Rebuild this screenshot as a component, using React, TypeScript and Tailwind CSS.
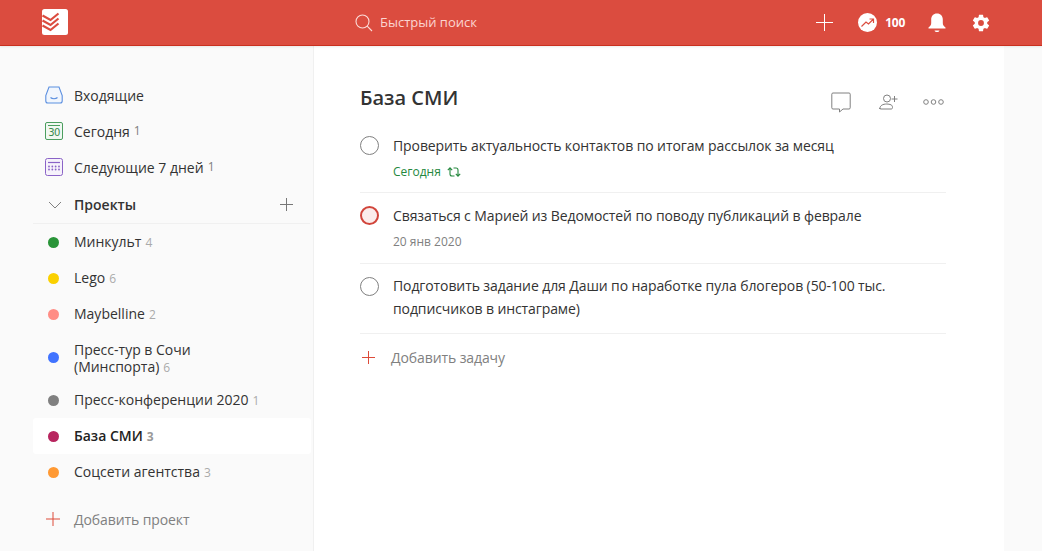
const font = { fontFamily: '"Open Sans", "Noto Sans", sans-serif' };

function Logo() {
  return (
    <svg width="26" height="26" viewBox="0 0 26 26">
      <rect width="26" height="26" rx="2.5" fill="#fff" />
      <path d="M0.500 6.500 L8.500 11 L16.500 4.500 M0.500 11.500 L8.500 16 L16.500 9.500 M0.500 16.500 L8.500 21 L16.500 14.500" fill="none" stroke="#db4c3f" strokeWidth="2.2" />
    </svg>
  );
}

function Plus({ size = 15, color = "#777", sw = 1 }: { size?: number; color?: string; sw?: number }) {
  return (
    <svg width={size} height={size} viewBox={`0 0 ${size} ${size}`} className="shrink-0">
      <path d={`M${size / 2} 0V${size}M0 ${size / 2}H${size}`} stroke={color} strokeWidth={sw} fill="none" />
    </svg>
  );
}

function Inbox() {
  return (
    <svg width="18" height="18" viewBox="0 0 18 18" fill="none" className="shrink-0">
      <path d="M4 1h10l3.200 8.500V15a2 2 0 0 1-2 2H2.800a2 2 0 0 1-2-2V9.500z" stroke="#5b8fe0" strokeWidth="1.100" fill="#f1f6fd" />
      <path d="M5.500 11.500c1 1 2 1.200 3.500 1.200s2.500-.2 3.500-1.200" stroke="#5b8fe0" strokeWidth="1.100" />
    </svg>
  );
}

function Today() {
  return (
    <div className="w-[18px] h-[18px] shrink-0 rounded-[2px] border border-[#4b9e5f] bg-[#f1f8f2] flex flex-col items-center pt-[2px]">
      <div className="w-[12px] h-px bg-[#4b9e5f]" />
      <span className="text-[10px] leading-[11px] text-[#3a8a4d] mt-px" style={{ fontFamily: '"DejaVu Sans", sans-serif', letterSpacing: "-0.5px" }}>30</span>
    </div>
  );
}

function Upcoming() {
  const dots = [];
  for (let y = 8.5; y <= 13; y += 3) for (let x = 4; x <= 14; x += 3.33) dots.push(<circle key={`${x}-${y}`} cx={x} cy={y} r="0.9" fill="#8a63c7" />);
  return (
    <svg width="18" height="18" viewBox="0 0 18 18" fill="none" className="shrink-0">
      <rect x="0.500" y="0.500" width="17" height="17" rx="2" stroke="#8a63c7" fill="#f6f2fb" />
      <path d="M3 4.500H15" stroke="#8a63c7" strokeWidth="1.200" />
      {dots}
    </svg>
  );
}

function Chevron() {
  return (
    <svg width="14" height="8" viewBox="0 0 14 8" fill="none" className="shrink-0">
      <path d="M1 1l6 6 6-6" stroke="#808080" strokeWidth="1" />
    </svg>
  );
}

function NavRow({ icon, label, count }: { icon: React.ReactNode; label: string; count?: string }) {
  return (
    <div className="h-9 flex items-center pl-3">
      <div className="w-[29px] flex">{icon}</div>
      <span className="text-[14px] text-[#333]">{label}</span>
      {count && <span className="text-[12px] text-[#808080] ml-[4px]">{count}</span>}
    </div>
  );
}

function Project({ color, label, count, active, two }: { color: string; label: React.ReactNode; count?: string; active?: boolean; two?: boolean }) {
  return (
    <div className={`flex items-center pl-[15px] pr-2 rounded-[3px] ${two ? "h-[50px]" : "h-9"} ${active ? "bg-white" : ""}`}>
      <div className="w-[11px] h-[11px] rounded-full shrink-0" style={{ backgroundColor: color }} />
      <div className={`ml-[15px] text-[14px] leading-[17px] ${two ? "pt-[2px]" : ""} ${active ? "font-semibold text-[#222]" : "text-[#333]"}`}>
        {label}
        {count && <span className={`text-[12px] ml-[4px] ${active ? "font-bold text-[#999]" : "text-[#aaa]"}`}>{count}</span>}
      </div>
    </div>
  );
}

function Circle({ red }: { red?: boolean }) {
  return (
    <div className={`w-[19px] h-[19px] rounded-full shrink-0 ${red ? "border-2 border-[#d1453b] bg-[#fbeceb]" : "border border-[#808080]"}`} />
  );
}

function Repeat() {
  return (
    <svg width="14" height="12" viewBox="0 0 14 12" fill="none" className="ml-[6px]">
      <path d="M3 2v6a2 2 0 0 0 2 2h2.500M.800 4.200 3 1.800l2.200 2.400M11 10V4a2 2 0 0 0-2-2H6.500M8.800 7.800 11 10.200l2.200-2.400" stroke="#25883e" strokeWidth="1.100" />
    </svg>
  );
}

export default function App() {
  return (
    <div className="w-[1042px] h-[551px] overflow-hidden bg-[#fafafa] flex flex-col" style={font}>
      <header className="h-[46px] shrink-0 bg-[#db4c3f] border-b border-[#c9301f] flex items-center relative shadow-[0_1px_2px_rgba(0,0,0,0.08)]">
        <div className="ml-[42px] -mt-[2px]"><Logo /></div>
        <div className="ml-[287px] flex items-center">
          <svg width="18" height="18" viewBox="0 0 18 18" fill="none">
            <circle cx="7.500" cy="7.500" r="6.500" stroke="#fbdcd9" strokeWidth="1.100" />
            <path d="M12.200 12.200L17 17" stroke="#fbdcd9" strokeWidth="1.100" />
          </svg>
          <span className="ml-[7px] text-[13px] text-[#fbd5d1]">Быстрый поиск</span>
        </div>
        <div className="ml-auto flex items-center mr-[51px]">
          <Plus size={17} color="#fff" sw={1} />
          <svg width="19" height="19" viewBox="0 0 19 19" className="ml-[25px]">
            <circle cx="9.500" cy="9.500" r="9.500" fill="#fff" />
            <path d="M3.500 13.500L8 9l2.500 2L15 6.500M11.500 6h4v4" fill="none" stroke="#db4c3f" strokeWidth="1.200" />
          </svg>
          <span className="ml-[8px] text-[12px] font-bold text-white tracking-[-0.3px]">100</span>
          <svg width="18" height="20" viewBox="0 0 18 20" className="ml-[23px]" fill="#fff">
            <path d="M9 0.500c-3.600 0-5.800 2.600-5.800 6v3.500c0 2-1 3.300-2.700 4.500v1h17v-1c-1.700-1.200-2.700-2.500-2.700-4.500V6.500c0-3.400-2.200-6-5.800-6z" />
            <path d="M6.500 17.500h5c-.3 1-1.300 1.500-2.500 1.500s-2.200-.5-2.500-1.500z" />
          </svg>
          <svg width="20" height="20" viewBox="0 0 24 24" className="ml-[25px]" fill="#fff">
            <path fillRule="evenodd" d="M19.430 12.980a7.800 7.800 0 0 0 0-1.960l2.110-1.650a.5.5 0 0 0 .12-.64l-2-3.460a.5.5 0 0 0-.61-.22l-2.490 1a7.300 7.300 0 0 0-1.690-.98l-.38-2.650A.49.49 0 0 0 14 2h-4a.49.49 0 0 0-.49.420l-.38 2.650a7.700 7.700 0 0 0-1.690.98l-2.490-1a.49.49 0 0 0-.61.220l-2 3.460a.49.49 0 0 0 .12.640l2.110 1.650a7.900 7.900 0 0 0 0 1.960l-2.110 1.650a.5.5 0 0 0-.12.640l2 3.460c.12.220.39.300.61.220l2.490-1c.52.400 1.080.730 1.690.980l.38 2.650c.03.240.24.420.49.420h4c.25 0 .46-.18.49-.42l.38-2.650a7.700 7.700 0 0 0 1.690-.98l2.490 1c.23.090.49 0 .61-.22l2-3.460a.5.5 0 0 0-.12-.64zM12 15.500a3.500 3.500 0 1 1 0-7 3.500 3.500 0 0 1 0 7z" />
          </svg>
        </div>
      </header>

      <div className="flex-1 flex min-h-0">
        <aside className="w-[314px] shrink-0 border-r border-[#f0f0f0] pt-[31px] pl-[33px] pr-[2px]">
          <NavRow icon={<Inbox />} label="Входящие" />
          <NavRow icon={<Today />} label="Сегодня" count="1" />
          <NavRow icon={<Upcoming />} label="Следующие 7 дней" count="1" />
          <div className="h-[39px] flex items-center pl-[15px] pr-[17px] pt-[1px] border-b border-[#f0f0f0] mr-[1px]">
            <div className="w-[26px] flex"><Chevron /></div>
            <span className="text-[14px] font-semibold text-[#333]">Проекты</span>
            <div className="ml-auto"><Plus size={13} color="#777" /></div>
          </div>
          <Project color="#299438" label="Минкульт" count="4" />
          <Project color="#fad000" label="Lego" count="6" />
          <Project color="#ff8d85" label="Maybelline" count="2" />
          <Project color="#4073ff" two label={<>Пресс-тур в Сочи<br />(Минспорта)</>} count="6" />
          <Project color="#808080" label="Пресс-конференции 2020" count="1" />
          <Project color="#b8255f" active label="База СМИ" count="3" />
          <Project color="#ff9933" label="Соцсети агентства" count="3" />
          <div className="h-9 mt-[11px] flex items-center pl-[13px]">
            <Plus size={14} color="#dd4b39" />
            <span className="ml-[14px] text-[14px] text-[#808080] tracking-[-0.1px]">Добавить проект</span>
          </div>
        </aside>

        <main className="w-[690px] shrink-0 bg-white pl-[46px] pr-[58px] pt-[37px]">
          <div className="flex items-center h-[30px] mb-[23px]">
            <h1 className="text-[20px] font-semibold text-[#333]">База СМИ</h1>
            <div className="ml-auto flex items-center mr-[2px] mt-2">
              <svg width="20" height="21" viewBox="0 0 20 21" fill="none">
                <path d="M2 1h16a1.200 1.200 0 0 1 1.200 1.200v13.600A1.200 1.200 0 0 1 18 17h-6l-3.500 3v-3H2A1.200 1.200 0 0 1 .800 15.800V2.200A1.200 1.200 0 0 1 2 1z" stroke="#808080" />
              </svg>
              <svg width="19" height="16" viewBox="0 0 19 16" fill="none" className="ml-[28px]">
                <circle cx="8" cy="4.500" r="3.500" stroke="#808080" />
                <path d="M.800 15c0-3.500 3-5 7-5 1.500 0 3 .3 4.200.8 1 .5 1.500 1.500 1.500 2.700 0 1-.5 1.500-1.500 1.500H2c-.8 0-1.200-.2-1.200-1z" stroke="#808080" />
                <path d="M15.500 2v6M12.500 5h6" stroke="#808080" />
              </svg>
              <svg width="21" height="6" viewBox="0 0 21 6" fill="none" className="ml-[25px]">
                <circle cx="3" cy="3" r="2.300" stroke="#808080" />
                <circle cx="10.500" cy="3" r="2.300" stroke="#808080" />
                <circle cx="18" cy="3" r="2.300" stroke="#808080" />
              </svg>
            </div>
          </div>

          <div className="border-b border-[#f0f0f0] h-[57px] flex flex-col">
            <div className="flex items-start">
              <Circle />
              <span className="ml-[14px] text-[14px] leading-[19px] text-[#333] tracking-[-0.1px]">Проверить актуальность контактов по итогам рассылок за месяц</span>
            </div>
            <div className="ml-[33px] mt-[9px] flex items-center text-[12px] leading-[16px] text-[#25883e]">Сегодня<Repeat /></div>
          </div>
          <div className="border-b border-[#f0f0f0] h-[71px] pt-[13px] flex flex-col">
            <div className="flex items-start">
              <Circle red />
              <span className="ml-[14px] text-[14px] leading-[19px] text-[#333] tracking-[-0.1px]">Связаться с Марией из Ведомостей по поводу публикаций в феврале</span>
            </div>
            <div className="ml-[33px] mt-[9px] text-[12px] leading-[16px] text-[#808080]">20 янв 2020</div>
          </div>
          <div className="border-b border-[#f0f0f0] h-[70px] pt-[13px]">
            <div className="flex items-start">
              <Circle />
              <span className="ml-[14px] text-[14px] leading-[23px] -mt-[3px] text-[#333] tracking-[-0.1px]">Подготовить задание для Даши по наработке пула блогеров (50-100 тыс.<br />подписчиков в инстаграме)</span>
            </div>
          </div>
          <div className="flex items-center h-[47px] pl-[2px]">
            <Plus size={13} color="#dd4b39" />
            <span className="ml-[16px] text-[14px] text-[#808080] tracking-[-0.1px]">Добавить задачу</span>
          </div>
        </main>
      </div>
    </div>
  );
}
